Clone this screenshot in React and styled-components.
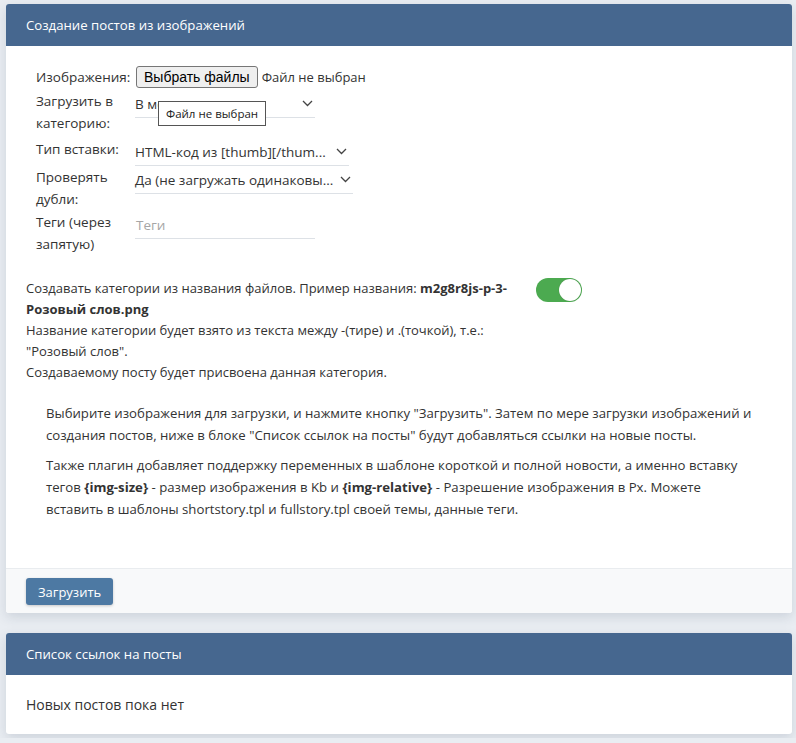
import React from 'react';
import styled, { createGlobalStyle } from 'styled-components';

const GlobalStyle = createGlobalStyle`
    html, body {
        margin: 0;
        padding: 0;
        background: #e9edf2;
    }
    body {
        font-family: "Open Sans", "Noto Sans", sans-serif;
        font-size: 14px;
        color: #333;
    }
`;

const Page = styled.div`
    padding: 4px 4px 4px 6px;
    display: flex;
    flex-direction: column;
    gap: 20px;
`;

const Card = styled.div`
    background: #fff;
    border-radius: 3px;
    box-shadow: 0 4px 12px rgba(40, 60, 90, 0.15);
    overflow: hidden;
`;

const CardHeader = styled.div`
    background: #46678f;
    color: #fff;
    height: 42px;
    line-height: 42px;
    padding: 0 20px;
    font-size: 13.2px;
`;

const CardBody = styled.div`
    padding: ${props => props.pad || '20px'};
`;

const CardFooter = styled.div`
    background: #f8f9fa;
    border-top: 1px solid #e9ecef;
    padding: 9px 20px 8px;
`;

const Form = styled.div`
    position: relative;
    padding-left: 10px;
`;

const Row = styled.div`
    display: grid;
    grid-template-columns: 99px auto;
    align-items: start;
    margin-bottom: ${props => props.mb ?? 2}px;
`;

const Label = styled.div`
    font-size: 13.5px;
    line-height: 22px;
    color: #333;
`;

const FileLine = styled.div`
    display: flex;
    align-items: center;
    height: 22px;
    gap: 4px;
    font-size: 13px;
`;

const FileButton = styled.button`
    height: 22px;
    padding: 0 7px;
    margin-left: 1px;
    background: #efefef;
    border: 1px solid #767676;
    border-radius: 3px;
    font-family: "Liberation Sans", Arial, sans-serif;
    font-size: 14px;
    color: #000;
`;

const Select = styled.div`
    width: ${props => props.w}px;
    height: 28px;
    box-sizing: border-box;
    border-bottom: 1px solid #dde1e6;
    display: flex;
    align-items: center;
    justify-content: space-between;
    padding: 0 2px 0 0;
    font-size: 13.5px;
    color: #333;
    white-space: nowrap;
`;

const Placeholder = styled.span`
    color: #a6a6a6;
    padding-left: 1px;
`;

const Tooltip = styled.div`
    position: absolute;
    left: 132px;
    top: 35px;
    background: #fff;
    border: 1px solid #555;
    padding: 3px 7px;
    font-size: 11.5px;
    line-height: 17px;
    color: #222;
`;

const SwitchRow = styled.div`
    display: flex;
    align-items: flex-start;
    gap: 12px;
    margin-top: 23px;
`;

const SwitchText = styled.div`
    width: 498px;
    font-size: 13px;
    line-height: 21px;
    b {
        font-weight: 700;
    }
`;

const Toggle = styled.div`
    width: 46px;
    height: 24px;
    border-radius: 12px;
    background: #4caa50;
    position: relative;
    flex-shrink: 0;
    &::after {
        content: '';
        position: absolute;
        right: 1px;
        top: 1px;
        width: 22px;
        height: 22px;
        border-radius: 50%;
        background: #fff;
        box-shadow: 0 0 1px rgba(0, 0, 0, 0.3);
    }
`;

const Info = styled.div`
    margin-top: 19px;
    margin-right: 16px;
    padding: 0 0 20px 20px;
    font-size: 13.2px;
    line-height: 22px;
    p {
        margin: 0 0 8px;
    }
`;

const Button = styled.button`
    background: #4d79a3;
    color: #fff;
    border: none;
    border-radius: 3px;
    height: 27px;
    padding: 0 12px;
    font-family: inherit;
    font-size: 13px;
    box-shadow: 0 1px 3px rgba(0, 0, 0, 0.2);
`;

const Chevron = () => (
    <svg width="11" height="7" viewBox="0 0 11 7" fill="none">
        <path d="M1 1l4.5 4.5L10 1" stroke="#444" strokeWidth="1.3" />
    </svg>
);

const App = () => {
    return (
        <Page>
            <GlobalStyle />
            <Card>
                <CardHeader>Создание постов из изображений</CardHeader>
                <CardBody>
                    <Form>
                        <Row mb={2}>
                            <Label>Изображения:</Label>
                            <FileLine>
                                <FileButton>Выбрать файлы</FileButton>
                                Файл не выбран
                            </FileLine>
                        </Row>
                        <Row mb={4}>
                            <Label>Загрузить в<br />категорию:</Label>
                            <Select w={180}>В мои новости<Chevron /></Select>
                        </Row>
                        <Row mb={0}>
                            <Label>Тип вставки:</Label>
                            <Select w={214}>HTML-код из [thumb][/thum...<Chevron /></Select>
                        </Row>
                        <Row mb={1}>
                            <Label>Проверять<br />дубли:</Label>
                            <Select w={218}>Да (не загружать одинаковы...<Chevron /></Select>
                        </Row>
                        <Row>
                            <Label>Теги (через<br />запятую)</Label>
                            <Select w={180}><Placeholder>Теги</Placeholder></Select>
                        </Row>
                        <Tooltip>Файл не выбран</Tooltip>
                    </Form>

                    <SwitchRow>
                        <SwitchText>
                            Создавать категории из названия файлов. Пример названия: <b>m2g8r8js-p-3-Розовый слов.png</b>
                            <br />
                            Название категории будет взято из текста между -(тире) и .(точкой), т.е.:
                            <br />
                            "Розовый слов".
                            <br />
                            Создаваемому посту будет присвоена данная категория.
                        </SwitchText>
                        <Toggle />
                    </SwitchRow>

                    <Info>
                        <p>
                            Выбирите изображения для загрузки, и нажмите кнопку "Загрузить". Затем по мере загрузки изображений и создания постов, ниже в блоке "Список ссылок на посты" будут добавляться ссылки на новые посты.
                        </p>
                        <p>
                            Также плагин добавляет поддержку переменных в шаблоне короткой и полной новости, а именно вставку тегов <b>{'{img-size}'}</b> - размер изображения в Kb и <b>{'{img-relative}'}</b> - Разрешение изображения в Px. Можете вставить в шаблоны shortstory.tpl и fullstory.tpl своей темы, данные теги.
                        </p>
                    </Info>
                </CardBody>
                <CardFooter>
                    <Button>Загрузить</Button>
                </CardFooter>
            </Card>

            <Card>
                <CardHeader>Список ссылок на посты</CardHeader>
                <CardBody>Новых постов пока нет</CardBody>
            </Card>
        </Page>
    );
};

export default App;
